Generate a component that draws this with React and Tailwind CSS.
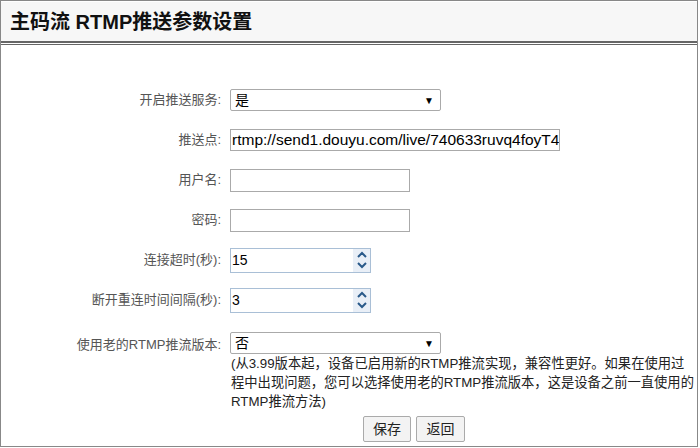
const F = { fontFamily: '"Liberation Sans","Noto Sans CJK SC",sans-serif' };

function Row({ label, children, h = 'h-[40px]' }) {
  return (
    <div className={`flex items-center ${h}`}>
      <div className="w-[229px] pr-[9px] text-right text-[13px] text-[#555]">{label}</div>
      <div>{children}</div>
    </div>
  );
}

function Select({ v }) {
  return (
    <div className="w-[211px] h-[22px] border border-[#aaa] rounded-[2px] flex items-center justify-between px-[4px] text-[14px] text-black bg-white">
      <span>{v}</span>
      <span className="text-[10px] mr-[2px]">▼</span>
    </div>
  );
}

function Spin({ v }) {
  return (
    <div className="w-[141px] h-[25px] border border-[#a9bfd6] flex items-center bg-white">
      <span className="flex-1 pl-[1px] text-[14px] text-black">{v}</span>
      <div className="w-[17px] h-full flex flex-col items-center justify-center bg-[#e9eff7]">
        <svg width="10" height="20" viewBox="0 0 10 20"><path d="M1 7L5 3L9 7M1 13L5 17L9 13" stroke="#2a5a8a" strokeWidth="2" fill="none"/></svg>
      </div>
    </div>
  );
}

export default function App() {
  return (
    <div style={F} className="w-[700px] h-[448px] bg-white">
      <div className="w-[698px] h-[447px] border border-[#888] border-t-[#888]">
        <div className="h-[39px] mt-[1px] bg-[#f7f7f7] flex items-center pl-[9px] text-[20px] font-bold text-[#111]">主码流 RTMP推送参数设置</div>
        <div className="h-[4px] border-t-2 border-b border-[#666]" />
        <div className="pt-[35px]">
          <Row label="开启推送服务:"><Select v="是" /></Row>
          <Row label="推送点:">
            <div className="w-[330px] h-[22px] border border-[#aaa] flex items-center px-[1px] text-[15.5px] text-black overflow-hidden whitespace-nowrap">rtmp://send1.douyu.com/live/740633ruvq4foyT4</div>
          </Row>
          <Row label="用户名:"><div className="w-[180px] h-[23px] border border-[#aaa]" /></Row>
          <Row label="密码:"><div className="w-[180px] h-[23px] border border-[#aaa]" /></Row>
          <Row label="连接超时(秒):"><Spin v="15" /></Row>
          <Row label="断开重连时间间隔(秒):"><Spin v="3" /></Row>
          <Row label="使用老的RTMP推流版本:" h="h-[34px] items-end"><Select v="否" /></Row>
          <div className="pl-[230px] pr-0 text-[13.3px] leading-[19px] text-[#222]">
            (从3.99版本起，设备已启用新的RTMP推流实现，兼容性更好。如果在使用过程中出现问题，您可以选择使用老的RTMP推流版本，这是设备之前一直使用的RTMP推流方法)
          </div>
          <div className="flex justify-center gap-[5px] pl-[130px] mt-[5px]">
            <button className="w-[48px] h-[26px] border border-[#aaa] rounded-[2px] bg-[#f3f3f3] text-[14px] text-[#222]">保存</button>
            <button className="w-[49px] h-[26px] border border-[#aaa] rounded-[2px] bg-[#f3f3f3] text-[14px] text-[#222]">返回</button>
          </div>
        </div>
      </div>
    </div>
  );
}
